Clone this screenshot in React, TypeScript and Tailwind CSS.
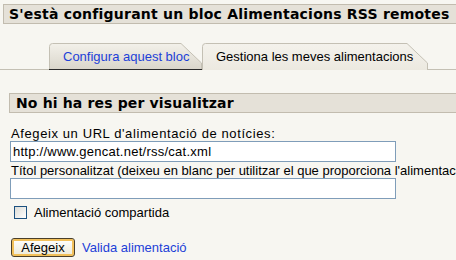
import React from "react";

const font = { fontFamily: '"Liberation Sans", Arial, sans-serif' };
const headFont = { fontFamily: '"DejaVu Sans", Verdana, sans-serif' };

const TabShape = ({ w, active }: { w: number; active: boolean }) => (
  <svg
    className="absolute inset-0"
    width={w}
    height={27}
    viewBox={`0 0 ${w} 27`}
  >
    <defs>
      <linearGradient id={active ? "gA" : "gI"} x1="0" y1="0" x2="0" y2="1">
        <stop offset="0" stopColor={active ? "#f4f2ec" : "#f3f1ea"} />
        <stop offset="1" stopColor={active ? "#ece9e0" : "#d9d5ca"} />
      </linearGradient>
    </defs>
    <path
      d={`M0.5,27 V3.5 Q0.5,0.5 3.5,0.5 H${w - 21} L${w - 0.5},20 V27`}
      fill={`url(#${active ? "gA" : "gI"})`}
      stroke="#c4c0b4"
    />
    {!active && <rect x="0" y="26" width={w} height="1" fill="#2b2b2b" />}
  </svg>
);

const Tab = ({ label, w, active }: { label: string; w: number; active: boolean }) => (
  <div className="relative h-[27px] shrink-0" style={{ width: w }}>
    <TabShape w={w} active={active} />
    <span
      className={`relative block pl-[14px] pt-[6px] text-[13px] leading-[16px] whitespace-nowrap ${
        active ? "text-black" : "text-[#1d3fd8]"
      }`}
    >
      {label}
    </span>
  </div>
);

export default function App() {
  return (
    <div
      className="w-[456px] h-[260px] overflow-hidden bg-[#f7f6f1] text-black"
      style={font}
    >
      <div className="pt-[4px] pl-[3px]">
        <div
          className="w-[480px] h-[20px] border border-[#c2bcaf] bg-[#e5e1d8] pl-[5px] text-[14px] leading-[18px] font-bold tracking-[0.22px] whitespace-nowrap"
          style={headFont}
        >
          S'està configurant un bloc Alimentacions RSS remotes
        </div>
      </div>

      <div className="mt-[19px] flex border-b border-[#c4c0b4] pl-[49px] h-[27px]">
        <Tab label="Configura aquest bloc" w={153} active={false} />
        <Tab label="Gestiona les meves alimentacions" w={226} active />
      </div>

      <div className="mt-[23px] pl-[9px]">
        <div
          className="w-[470px] h-[20px] border border-[#c2bcaf] bg-[#e5e1d8] pl-[6px] text-[14px] leading-[18px] font-bold tracking-[0.15px] whitespace-nowrap"
          style={headFont}
        >
          No hi ha res per visualitzar
        </div>
      </div>

      <form className="pl-[10px] pt-[13px] text-[13px] leading-[15px]">
        <label className="block pl-[1px] whitespace-nowrap tracking-[0.6px]">
          Afegeix un URL d'alimentació de notícies:
        </label>
        <input
          type="text"
          defaultValue="http://www.gencat.net/rss/cat.xml"
          className="block w-[386px] h-[21px] border border-[#7f9db9] bg-white px-[2px] text-[13px] tracking-[0.25px] outline-none"
          style={font}
        />
        <label className="block pl-[1px] pt-[1px] whitespace-nowrap">
          Títol personalitzat (deixeu en blanc per utilitzar el que proporciona l'alimentació)
        </label>
        <input
          type="text"
          className="block w-[386px] h-[21px] border border-[#7f9db9] bg-white px-[2px] text-[13px] outline-none"
          style={font}
        />
        <label className="mt-[6px] flex items-center gap-[7px] pl-[4px]">
          <input
            type="checkbox"
            className="appearance-none w-[13px] h-[13px] border border-[#1c5180] bg-gradient-to-br from-[#dcdcd7] to-white"
          />
          <span className="text-[13px] leading-[15px]">Alimentació compartida</span>
        </label>
        <div className="mt-[18px] flex items-center gap-[7px] pl-[1px]">
          <button
            type="button"
            className="w-[64px] h-[19px] rounded-[3px] border border-[#4a3f2a] bg-gradient-to-b from-white to-[#ece9d8] shadow-[inset_0_0_0_2px_#f2c05a] text-[13px] leading-[15px] text-black"
            style={font}
          >
            Afegeix
          </button>
          <a href="#" className="text-[#1d3fd8] text-[13px]">
            Valida alimentació
          </a>
        </div>
      </form>
    </div>
  );
}
